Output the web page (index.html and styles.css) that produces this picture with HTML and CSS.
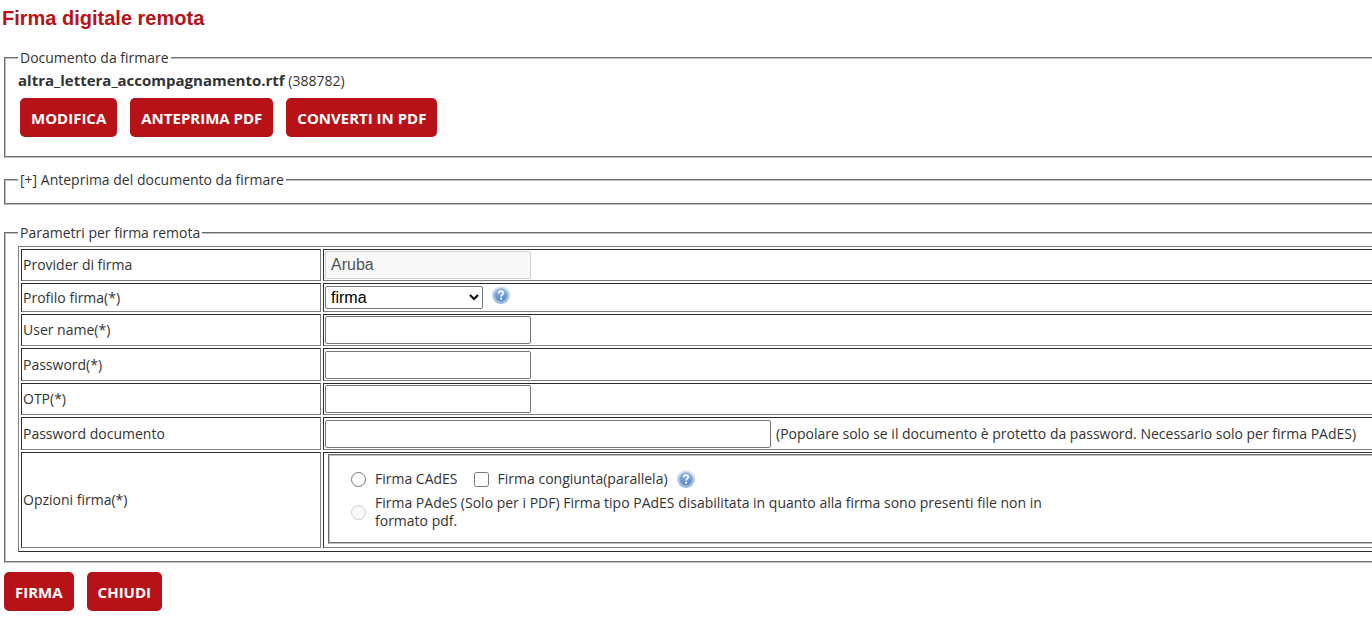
FILE: index.html
```html
<!DOCTYPE html>
<html lang="it">
<head>
<meta charset="utf-8">
<title>Firma digitale remota</title>
<link rel="stylesheet" href="styles.css">
</head>
<body>
<svg class="defs" width="0" height="0" aria-hidden="true">
  <defs>
    <linearGradient id="ring" x1="0" y1="0" x2="0" y2="1">
      <stop offset="0" stop-color="#dceaf8"/>
      <stop offset="1" stop-color="#94b5de"/>
    </linearGradient>
    <linearGradient id="disc" x1="0" y1="0" x2="0" y2="1">
      <stop offset="0" stop-color="#9dbde3"/>
      <stop offset="1" stop-color="#4f83c2"/>
    </linearGradient>
    <symbol id="help" viewBox="0 0 18 18">
      <circle cx="9" cy="9" r="9" fill="url(#ring)"/>
      <circle cx="9" cy="9" r="6.2" fill="url(#disc)" stroke="#78a1d4" stroke-width=".8"/>
      <path d="M6.8 7.2C6.8 4.4 11.3 4.4 11.3 7.1C11.3 8.7 9.1 8.6 9.1 10.5" fill="none" stroke="#fff" stroke-width="1.7"/>
      <circle cx="9.1" cy="12.7" r="1.1" fill="#fff"/>
    </symbol>
  </defs>
</svg>
<form class="page">
  <h1 class="title">Firma digitale remota</h1>

  <fieldset class="panel document">
    <legend>Documento da firmare</legend>
    <p class="file"><strong>altra_lettera_accompagnamento.rtf</strong> (388782)</p>
    <div class="actions">
      <button type="button" class="btn">MODIFICA</button>
      <button type="button" class="btn">ANTEPRIMA PDF</button>
      <button type="button" class="btn">CONVERTI IN PDF</button>
    </div>
  </fieldset>

  <fieldset class="panel preview">
    <legend>[+] Anteprima del documento da firmare</legend>
  </fieldset>

  <fieldset class="panel params">
    <legend>Parametri per firma remota</legend>
    <table class="grid">
      <tr>
        <td class="name"><label for="provider">Provider di firma</label></td>
        <td><div class="field"><input class="text" id="provider" type="text" value="Aruba" disabled></div></td>
      </tr>
      <tr class="compact">
        <td class="name"><label for="profile">Profilo firma(*)</label></td>
        <td><div class="field top">
          <select class="select" id="profile"><option>firma</option></select>
          <svg class="help"><use href="#help"/></svg>
        </div></td>
      </tr>
      <tr>
        <td class="name"><label for="user">User name(*)</label></td>
        <td><div class="field"><input class="text" id="user" type="text"></div></td>
      </tr>
      <tr>
        <td class="name"><label for="password">Password(*)</label></td>
        <td><div class="field"><input class="text" id="password" type="password"></div></td>
      </tr>
      <tr>
        <td class="name"><label for="otp">OTP(*)</label></td>
        <td><div class="field"><input class="text" id="otp" type="password"></div></td>
      </tr>
      <tr>
        <td class="name"><label for="docpass">Password documento</label></td>
        <td><div class="field"><input class="text wide" id="docpass" type="password"><span class="note">(Popolare solo se il documento è protetto da password. Necessario solo per firma PAdES)</span></div></td>
      </tr>
      <tr>
        <td class="name">Opzioni firma(*)</td>
        <td>
          <fieldset class="options">
            <div class="option">
              <input class="tick" type="radio" name="type" id="cades">
              <label for="cades">Firma CAdES</label>
              <input class="tick box" type="checkbox" id="parallel">
              <label for="parallel">Firma congiunta(parallela)</label>
              <svg class="help"><use href="#help"/></svg>
            </div>
            <div class="option">
              <input class="tick" type="radio" name="type" id="pades" disabled>
              <label class="long" for="pades">Firma PAdeS (Solo per i PDF) Firma tipo PAdES disabilitata in quanto alla firma sono presenti file non in formato pdf.</label>
            </div>
          </fieldset>
        </td>
      </tr>
    </table>
  </fieldset>

  <div class="footer">
    <button type="submit" class="btn">FIRMA</button>
    <button type="button" class="btn">CHIUDI</button>
  </div>
</form>
</body>
</html>
```
FILE: styles.css
```css
body {
  margin: 0;
  overflow-x: hidden;
  background: #fff;
  color: #333;
  font: 14px/18px "Open Sans", Tahoma, sans-serif;
}

.defs {
  position: absolute;
}

/* The panels run past the right edge of the window. */
.page {
  margin: 0 -32px 0 4px;
}

.title {
  margin: 0 0 19px -2px;
  padding-top: 6px;
  color: #b71218;
  font: bold 20px/24px "Liberation Sans", Arial, sans-serif;
}

.panel {
  box-sizing: border-box;
  margin: 0;
  padding: 0 12px;
  border: 2px groove #c0c0c0;
}

legend {
  padding: 0 2px;
}

.document {
  padding-bottom: 19px;
}

.file {
  margin: 4px 0 8px;
}

.file strong {
  font-size: 15px;
}

.actions {
  display: flex;
  gap: 13px;
  margin-left: 2px;
}

.btn {
  height: 39px;
  padding: 0 11px;
  border: 0;
  border-radius: 5px;
  background: #b71218;
  color: #fff;
  font: bold 15px/20px "Open Sans", Tahoma, sans-serif;
}

.preview {
  margin-top: 13px;
  padding-bottom: 14px;
}

.params {
  margin-top: 19px;
  padding-bottom: 9px;
}

.grid {
  width: 100%;
  margin-top: 4px;
  padding-bottom: 1px;
  border: 1px outset #808080;
  border-spacing: 2px;
}

.grid td {
  height: 28px;
  padding: 1px;
  border: 1px inset #808080;
}

.grid tr:nth-child(even) td {
  height: 29px;
}

.grid .compact td,
.grid tr.compact:nth-child(even) td {
  height: 25px;
}

.grid .name {
  width: 296px;
}

.field,
.option {
  display: flex;
  align-items: center;
}

.field.top {
  align-items: flex-start;
}

.text {
  box-sizing: border-box;
  width: 206px;
  height: 28px;
  padding: 0 5px;
  border: 1px solid #767676;
  border-radius: 2px;
  background: #fff;
  font: 16px/20px "Liberation Sans", Arial, sans-serif;
}

.text:disabled {
  border-color: #d0d0d0;
  background: #f8f8f8;
  color: #545454;
}

.wide {
  width: 446px;
}

.note {
  margin-left: 5px;
}

.select {
  width: 158px;
  height: 23px;
  padding: 0 1px;
  border: 1px solid #767676;
  border-radius: 2px;
  background-color: #fff;
  color: #000;
  font: 16px/20px "Liberation Sans", Arial, sans-serif;
}

.help {
  width: 18px;
  height: 18px;
  margin-left: 9px;
}

.options {
  margin: 0 4px 2px 3px;
  padding: 14px 21px 12px;
  border: 2px groove #c0c0c0;
}

.option + .option {
  margin-top: 6px;
}

.tick {
  flex: none;
  width: 15px;
  height: 15px;
  margin: 0 9px 0 0;
}

.box {
  margin-left: 16px;
}

.long {
  max-width: 680px;
}

.footer {
  display: flex;
  gap: 13px;
  margin-top: 9px;
}
```
